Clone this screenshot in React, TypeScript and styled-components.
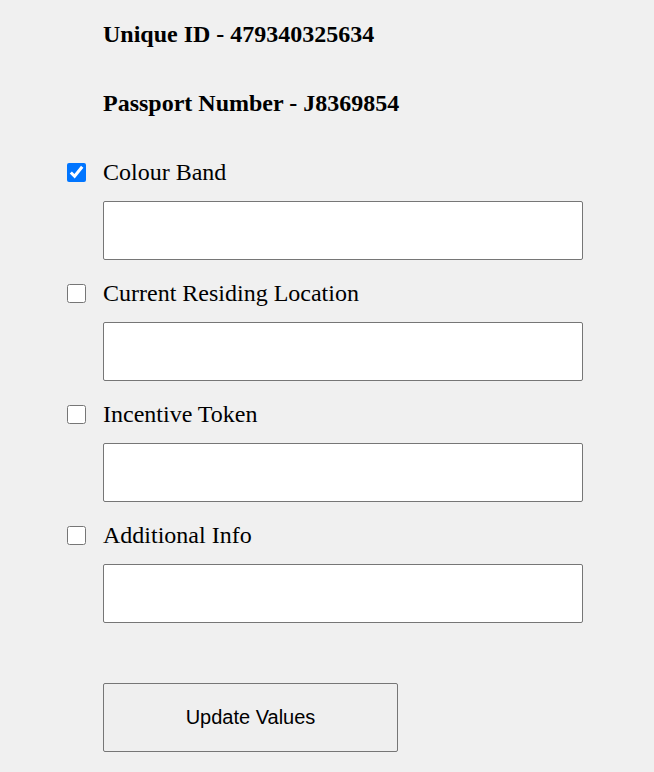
import { useState } from "react";
import styled, { createGlobalStyle } from "styled-components";

const GlobalStyle = createGlobalStyle`
  html, body {
    margin: 0;
    padding: 0;
    background: #f0f0f0;
  }
  body {
    font-family: "Liberation Serif", "Times New Roman", serif;
    color: #000;
  }
`;

interface Field {
  key: string;
  label: string;
}

const fields: Field[] = [
  { key: "colourBand", label: "Colour Band" },
  { key: "location", label: "Current Residing Location" },
  { key: "token", label: "Incentive Token" },
  { key: "info", label: "Additional Info" },
];

const App = () => {
  const [checked, setChecked] = useState<Record<string, boolean>>({
    colourBand: true,
  });

  return (
    <>
      <GlobalStyle />
      <Page>
        <Heading>Unique ID - 479340325634</Heading>
        <Heading>Passport Number - J8369854</Heading>
        {fields.map((f) => (
          <Group key={f.key}>
            <LabelRow>
              <Check
                type="checkbox"
                checked={!!checked[f.key]}
                onChange={(e) =>
                  setChecked({ ...checked, [f.key]: e.target.checked })
                }
              />
              <LabelText>{f.label}</LabelText>
            </LabelRow>
            <TextInput type="text" />
          </Group>
        ))}
        <UpdateButton type="button">Update Values</UpdateButton>
      </Page>
    </>
  );
};

const Page = styled.div`
  display: flex;
  flex-direction: column;
  align-items: flex-start;
  padding: 20px 0 20px 103px;
`;

const Heading = styled.h2`
  margin: 0 0 41px;
  font-size: 24px;
  line-height: 28px;
  font-weight: bold;
`;

const Group = styled.div`
  display: flex;
  flex-direction: column;
  gap: 15px;
  margin-bottom: 19px;
`;

const LabelRow = styled.label`
  position: relative;
  display: flex;
  align-items: center;
  height: 28px;
`;

const Check = styled.input`
  position: absolute;
  left: -36px;
  top: 5px;
  width: 19px;
  height: 19px;
  margin: 0;
`;

const LabelText = styled.span`
  font-size: 24px;
  line-height: 28px;
`;

const TextInput = styled.input`
  box-sizing: border-box;
  width: 480px;
  height: 59px;
  margin: 0;
  border: 1px solid #767676;
  border-radius: 2px;
  background: #fff;
  font-size: 20px;
  padding: 0 8px;
`;

const UpdateButton = styled.button`
  box-sizing: border-box;
  width: 295px;
  height: 69px;
  margin-top: 41px;
  border: 1px solid #767676;
  border-radius: 2px;
  background: #efefef;
  font-family: "Liberation Sans", Arial, sans-serif;
  font-size: 20px;
  color: #000;
`;

export default App;
